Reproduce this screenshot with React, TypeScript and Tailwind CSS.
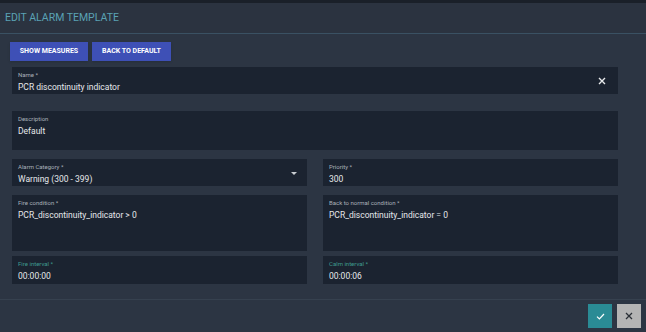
import React from "react";

function Field({
  label,
  value,
  className = "",
  labelClass = "text-[#a9b0b9]",
  children,
}: {
  label: string;
  value: string;
  className?: string;
  labelClass?: string;
  children?: React.ReactNode;
}) {
  return (
    <div className={`relative bg-[#1b2330] px-[6px] pt-[4px] ${className}`}>
      <div className={`text-[6px] leading-[8px] ${labelClass}`}>{label}</div>
      <div className="text-[8.5px] leading-[12px] mt-[2px] text-[#e6e8eb]">{value}</div>
      {children}
    </div>
  );
}

export default function App() {
  return (
    <div
      className="w-[646px] h-[332px] bg-[#2c3543] overflow-hidden relative"
      style={{ fontFamily: "Roboto, 'Liberation Sans', sans-serif" }}
    >
      <div className="h-[3px] bg-[#1a2029]" />
      <div className="h-[30px] flex items-center px-[5px] bg-[#2b3340]">
        <span className="text-[10.5px] text-[#5aa2b4]">EDIT ALARM TEMPLATE</span>
      </div>
      <div className="h-px bg-[#3a5163]" />

      <div className="pt-[8px] pl-[10px] pr-[28px]">
        <div className="flex gap-[4px]">
          <button className="h-[19px] w-[78px] bg-[#3e50b6] text-white text-[7px] font-bold shadow">
            SHOW MEASURES
          </button>
          <button className="h-[19px] w-[79px] bg-[#3e50b6] text-white text-[7px] font-bold shadow">
            BACK TO DEFAULT
          </button>
        </div>

        <div className="pl-[2px] w-[608px]">
          <Field label="Name *" value="PCR discontinuity indicator" className="mt-[6px] h-[27px]">
            <svg
              className="absolute right-[12px] top-[10px]"
              width="8"
              height="8"
              viewBox="0 0 8 8"
              stroke="#e8eaec"
              strokeWidth="1.4"
            >
              <path d="M1 1L7 7M7 1L1 7" />
            </svg>
          </Field>

          <Field label="Description" value="Default" className="mt-[17px] h-[39px]" />

          <div className="grid grid-cols-2 gap-x-[16px] gap-y-[9px] mt-[9px]">
            <Field label="Alarm Category *" value="Warning (300 - 399)" className="h-[27px]">
              <svg className="absolute right-[10px] top-[13px]" width="6" height="3" viewBox="0 0 6 3">
                <path d="M0 0H6L3 3Z" fill="#c9cdd2" />
              </svg>
            </Field>
            <Field label="Priority *" value="300" className="h-[27px]" />
            <Field label="Fire condition *" value="PCR_discontinuity_indicator > 0" className="h-[56px]" />
            <Field label="Back to normal condition *" value="PCR_discontinuity_indicator = 0" className="h-[56px]" />
          </div>
          <div className="grid grid-cols-2 gap-x-[16px] mt-[5px]">
            <Field label="Fire interval *" value="00:00:00" labelClass="text-[#3f9a8f]" className="h-[28px]" />
            <Field label="Calm interval *" value="00:00:06" labelClass="text-[#3f9a8f]" className="h-[28px]" />
          </div>
        </div>
      </div>

      <div className="mt-[15px] h-px bg-[#36414f]" />
      <div className="flex justify-end gap-[5px] pr-[5px] pt-[4px]">
        <button className="w-[24px] h-[24px] bg-[#2a8b95] flex items-center justify-center">
          <svg width="9" height="7" viewBox="0 0 9 7" fill="none" stroke="#ffffff" strokeWidth="1.2">
            <path d="M1 3.6L3.4 6L8 1" />
          </svg>
        </button>
        <button className="w-[24px] h-[24px] bg-[#b4b4b4] flex items-center justify-center">
          <svg width="8" height="8" viewBox="0 0 8 8" stroke="#2a2f36" strokeWidth="1.3">
            <path d="M1 1L7 7M7 1L1 7" />
          </svg>
        </button>
      </div>
    </div>
  );
}
